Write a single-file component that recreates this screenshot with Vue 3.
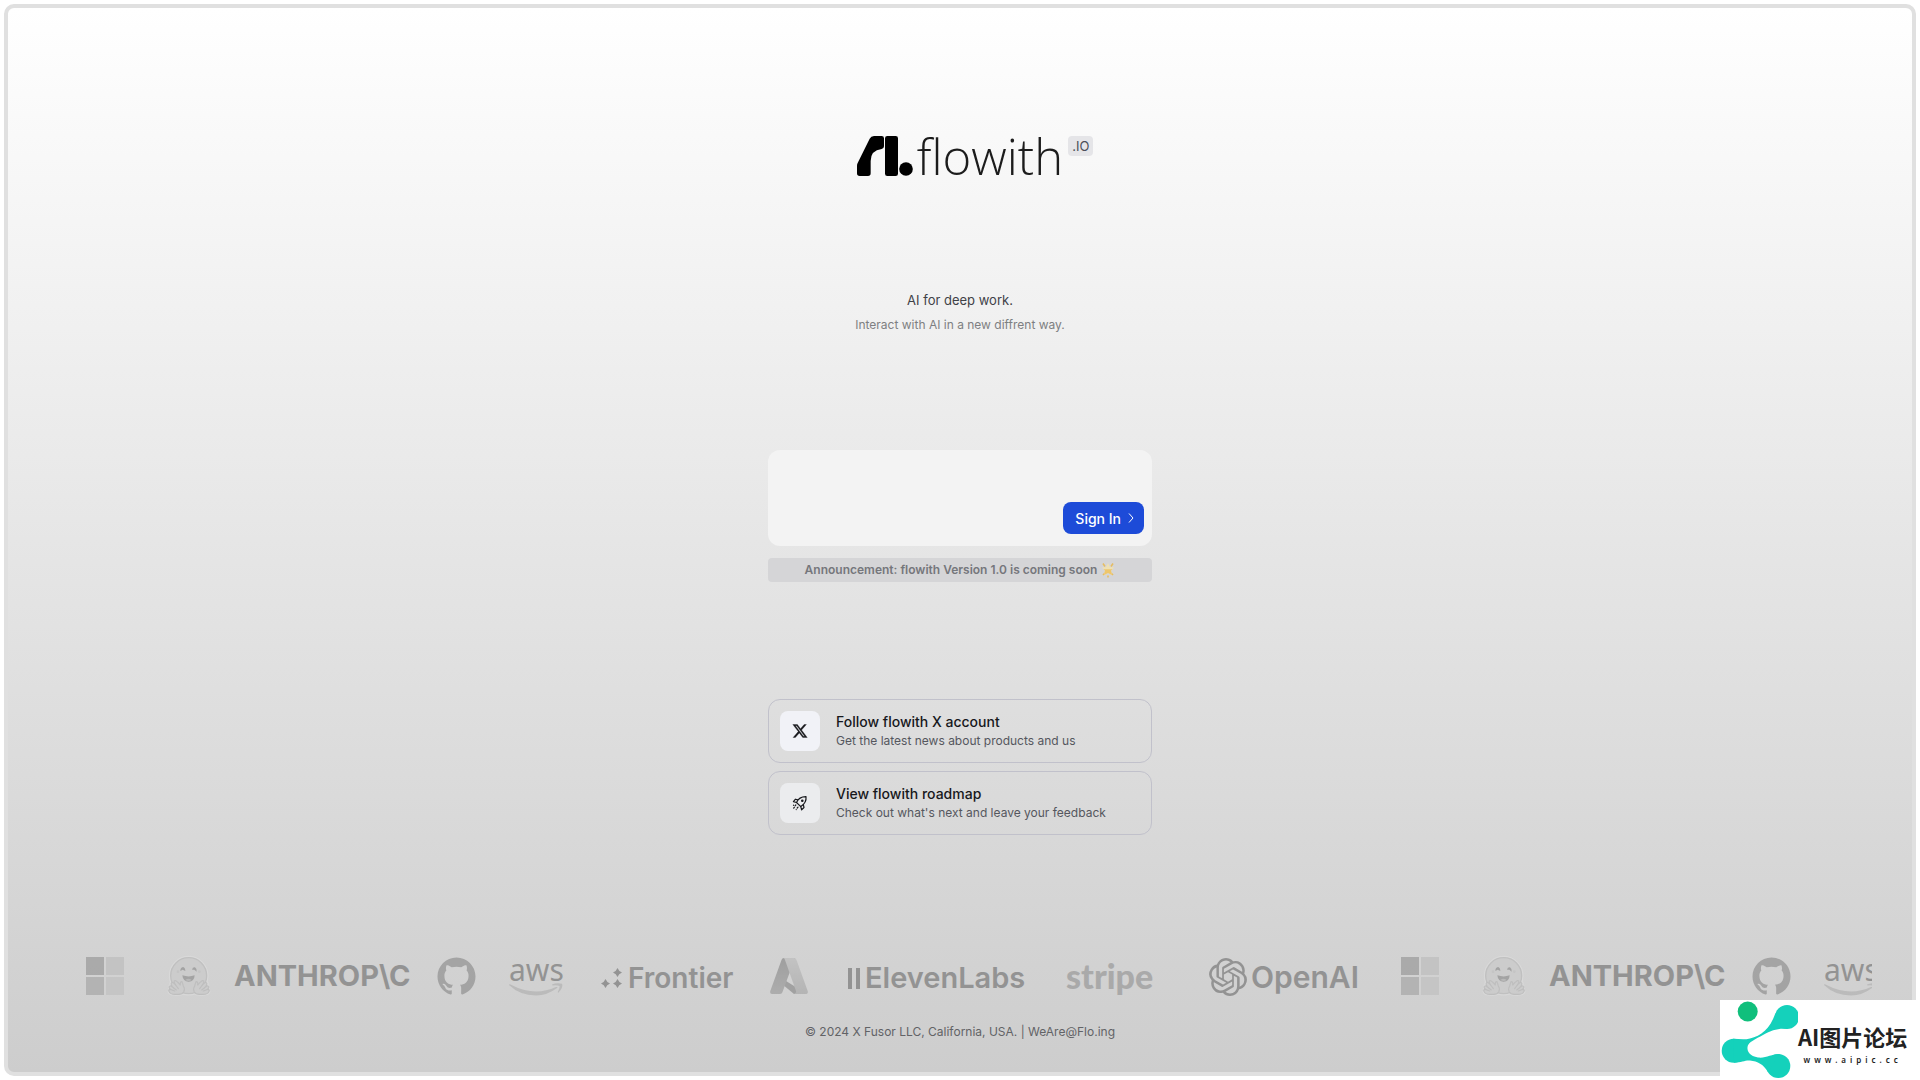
<template>
    <div class="page">
        <main class="frame">
            <h1 class="logo">
                <svg class="logo-mark" viewBox="57 48 168 120" aria-hidden="true">
                    <path d="M57 137Q57 133 59 129L95 56Q99 48 108 48H131Q138 48 138 55V79Q138 86 131 87Q98 91 98 123V160Q98 168 90 168H65Q57 168 57 160Z"/>
                    <rect x="141" y="48" width="39" height="120" rx="7"/>
                    <circle cx="204" cy="147" r="20.5"/>
                </svg>
                <span class="logo-name">flowith</span>
                <span class="logo-badge">.IO</span>
            </h1>

            <p class="tagline">AI for deep work.</p>
            <p class="subline">Interact with AI in a new diffrent way.</p>

            <section class="sign-box">
                <button type="button" class="sign-btn">
                    Sign In
                    <svg width="8" height="12" viewBox="0 0 8 12" fill="none" stroke="currentColor" aria-hidden="true">
                        <path d="M2 1.5L6 6L2 10.5"/>
                    </svg>
                </button>
            </section>

            <p class="announce">
                Announcement: flowith Version 1.0 is coming soon
                <svg class="star" viewBox="0 0 14 16" aria-hidden="true">
                    <path d="M2 1.500L4 4.500M12 1.500L10 4.500M2 13L4 11M12 13L10 11M7 13.500V15.500" stroke="#e6bd62" stroke-width="1.600"/>
                    <path d="M7 1L9 5L13.200 5.500L10 8.500L11 13L7 11L3 13L4 8.500L.8 5.500L5 5Z" fill="#eee0b4"/>
                    <path d="M2.500 7.200H11.500L10 8.500L11 13L7 11L3 13L4 8.500Z" fill="#eec66c"/>
                </svg>
            </p>

            <nav class="links">
                <a v-for="item in links" :key="item.title" href="#" class="link-card">
                    <span class="link-icon" :class="item.icon">
                        <svg v-if="item.icon == 'x'" width="16" height="16" viewBox="0 0 24 24" fill="currentColor" stroke="currentColor" stroke-width=".5">
                            <path d="M18.244 2.25h3.308l-7.227 8.26 8.502 11.24H16.17l-5.214-6.817L4.99 21.75H1.68l7.73-8.835L1.254 2.25H8.08l4.713 6.231zm-1.161 17.52h1.833L7.084 4.126H5.117z"/>
                        </svg>
                        <svg v-else width="16" height="16" viewBox="0 0 16 16" fill="none" stroke="currentColor" stroke-width="1.2" stroke-linejoin="round" stroke-linecap="round">
                            <path d="M4.500 7.500C6 4 8.500 1.500 14 1.600C14.600 6.500 12 9.500 8.800 11.600Z"/>
                            <path d="M5.800 4.900L3.500 4.200L1.400 6.600L4.500 7.500M11.300 9.700L12 12.500L9.600 14.800L8.800 11.600"/>
                            <circle cx="10.300" cy="5.700" r=".7"/>
                            <path d="M3.800 10L3 10.800M6 12.200L5.200 13M1.500 10.200V10.300M1.700 13L2.300 12.500M4.200 14.500V14.600"/>
                        </svg>
                    </span>
                    <span class="link-text">
                        <strong>{{ item.title }}</strong>
                        <small>{{ item.desc }}</small>
                    </span>
                </a>
            </nav>

            <div class="marquee">
                <div v-for="n in 2" :key="n" class="track">
                    <div class="brand microsoft">
                        <svg width="38" height="38" viewBox="0 0 38 38">
                            <path d="M0 0H18V18H0Z" fill="#909090"/>
                            <path d="M20 0H38V18H20Z" fill="#bababa"/>
                            <path d="M0 20H18V38H0Z" fill="#a0a0a0"/>
                            <path d="M20 20H38V38H20Z" fill="#bebebe"/>
                        </svg>
                    </div>
                    <div class="brand hugging">
                        <svg width="44" height="42" viewBox="322 44 132 126">
                            <g fill="#dedede" stroke="#dedede" stroke-width="7">
                                <circle cx="387" cy="106" r="56"/>
                                <path d="M330 148Q326 138 333 135Q330 126 339 124Q341 117 350 121Q372 130 376 148Q374 164 352 163Q330 164 327 154Z"/>
                                <path d="M446 148Q450 138 443 135Q446 126 437 124Q435 117 426 121Q404 130 400 148Q402 164 424 163Q446 164 449 154Z"/>
                            </g>
                            <circle cx="387" cy="106" r="54" fill="#c9c9c9" stroke="#b5b5b5" stroke-width="4"/>
                            <path d="M362 92Q362 81 370 80Q377 82 377 92L369 88ZM397 88Q399 80 406 81Q412 85 411 94L404 88Z" fill="#858585"/>
                            <path d="M368 105Q387 112 405 105Q404 124 387 124Q370 124 368 105Z" fill="#858585"/>
                            <path d="M377 119Q386 111 396 119Q387 125 377 119Z" fill="#a8a8a8"/>
                            <circle cx="355" cy="94" r="4" fill="#bdbdbd"/>
                            <circle cx="419" cy="94" r="4" fill="#bdbdbd"/>
                            <g fill="#c9c9c9" stroke="#b3b3b3" stroke-width="3.5" stroke-linejoin="round" stroke-linecap="round">
                                <path d="M328 153Q325 148 332 147Q325 139 331 137Q335 136 341 142Q331 131 336 127Q339 124 348 134Q340 122 346 121Q350 120 362 134Q361 123 367 124Q369 130 371 137Q377 145 372 155Q367 164 352 162Q332 164 328 153Z"/>
                                <path d="M448 153Q451 148 444 147Q451 139 445 137Q441 136 435 142Q445 131 440 127Q437 124 428 134Q436 122 430 121Q426 120 414 134Q415 123 409 124Q407 130 405 137Q399 145 404 155Q409 164 424 162Q444 164 448 153Z"/>
                                <path d="M332 147L345 152M341 142L350 149M348 134L356 145M444 147L431 152M435 142L426 149M428 134L420 145" fill="none"/>
                            </g>
                        </svg>
                    </div>
                    <div class="brand anthropic">ANTHROP\C</div>
                    <div class="brand github">
                        <svg width="39" height="38" viewBox="0 0 24 24" fill="#868686">
                            <path d="M12 .297c-6.63 0-12 5.373-12 12 0 5.303 3.438 9.8 8.205 11.385.6.113.82-.258.82-.577 0-.285-.01-1.04-.015-2.04-3.338.724-4.042-1.61-4.042-1.61C4.422 18.07 3.633 17.7 3.633 17.7c-1.087-.744.084-.729.084-.729 1.205.084 1.838 1.236 1.838 1.236 1.07 1.835 2.809 1.305 3.495.998.108-.776.417-1.305.76-1.605-2.665-.3-5.466-1.332-5.466-5.93 0-1.31.465-2.38 1.235-3.22-.135-.303-.54-1.523.105-3.176 0 0 1.005-.322 3.3 1.23.96-.267 1.98-.399 3-.405 1.02.006 2.04.138 3 .405 2.28-1.552 3.285-1.23 3.285-1.23.645 1.653.24 2.873.12 3.176.765.84 1.23 1.91 1.23 3.22 0 4.61-2.805 5.625-5.475 5.92.42.36.81 1.096.81 2.22 0 1.606-.015 2.896-.015 3.286 0 .315.21.69.825.57C20.565 22.092 24 17.592 24 12.297c0-6.627-5.373-12-12-12"/>
                        </svg>
                    </div>
                    <div class="brand aws">
                        <span class="aws-name">aws</span>
                        <svg width="54" height="13" viewBox="0 0 54 13" fill="#adadad">
                            <path d="M0 2Q0 .8 1.500 1.500Q25 14 47 4Q49.500 3.500 48 5Q38 12.500 27 12.500Q11 12.500 0 2Z"/>
                            <path d="M43 1.500Q48-.8 53 .8Q54.500 4 49.500 9.500Q48.500 10 49 8.500Q51 4.500 50.500 3Q48.500 2 43.500 2.500Z"/>
                        </svg>
                    </div>
                    <div class="brand frontier">
                        <svg width="21" height="20" viewBox="0 0 21 20" fill="#6a6a6a">
                            <path d="M16.500 0Q17.700 3.300 21 4.500Q17.700 5.700 16.500 9Q15.300 5.700 12 4.500Q15.300 3.300 16.500 0Z"/>
                            <path d="M16.500 11Q17.700 14.300 21 15.500Q17.700 16.700 16.500 20Q15.300 16.700 12 15.500Q15.300 14.300 16.500 11Z"/>
                            <path d="M4.500 11Q5.700 14.300 9 15.500Q5.700 16.700 4.500 20Q3.300 16.700 0 15.500Q3.300 14.300 4.500 11Z"/>
                        </svg>
                        <span>Frontier</span>
                    </div>
                    <div class="brand azure">
                        <svg width="38" height="36" viewBox="0 0 38 36">
                            <defs>
                                <linearGradient :id="'azl' + n" x1="0" y1="0" x2="0" y2="1">
                                    <stop offset="0" stop-color="#7d7d7d"/>
                                    <stop offset="1" stop-color="#969696"/>
                                </linearGradient>
                                <linearGradient :id="'azr' + n" x1="0" y1="0" x2="0" y2="1">
                                    <stop offset="0" stop-color="#b9b9b9"/>
                                    <stop offset="1" stop-color="#a2a2a2"/>
                                </linearGradient>
                            </defs>
                            <path d="M13 0H24L20 13L11 24Q11 25 12 26L24 36Q25 36 25 36H37L16 23Z" fill="#828282"/>
                            <path d="M14 0H25L12.500 34Q12 36 10 36H2Q-.5 36 .3 33L11.500 2Q12 0 14 0Z" :fill="'url(#azl' + n + ')'"/>
                            <path d="M13 0H24Q26 0 26.500 2L37.700 33Q38.500 36 36 36H24Q26.500 35 26 33L15 2Q14.500 0 13 0Z" :fill="'url(#azr' + n + ')'"/>
                        </svg>
                    </div>
                    <div class="brand eleven">
                        <svg width="13" height="21" viewBox="0 0 13 21" fill="#6a6a6a">
                            <path d="M0 0H4V21H0ZM8 0H12V21H8Z"/>
                        </svg>
                        <span>ElevenLabs</span>
                    </div>
                    <div class="brand stripe">stripe</div>
                    <div class="brand openai">
                        <svg width="38" height="40" viewBox="0 0 24 24" fill="#6a6a6a">
                            <path d="M22.2819 9.8211a5.9847 5.9847 0 0 0-.5157-4.9108 6.0462 6.0462 0 0 0-6.5098-2.9A6.0651 6.0651 0 0 0 4.9807 4.1818a5.9847 5.9847 0 0 0-3.9977 2.9 6.0462 6.0462 0 0 0 .7427 7.0966 5.98 5.98 0 0 0 .511 4.9107 6.051 6.051 0 0 0 6.5146 2.9001A5.9847 5.9847 0 0 0 13.2599 24a6.0557 6.0557 0 0 0 5.7718-4.2058 5.9894 5.9894 0 0 0 3.9977-2.9001 6.0557 6.0557 0 0 0-.7475-7.0729zm-9.022 12.6081a4.4755 4.4755 0 0 1-2.8764-1.0408l.1419-.0804 4.7783-2.7582a.7948.7948 0 0 0 .3927-.6813v-6.7369l2.02 1.1686a.071.071 0 0 1 .038.052v5.5826a4.504 4.504 0 0 1-4.4945 4.4944zm-9.6607-4.1254a4.4708 4.4708 0 0 1-.5346-3.0137l.142.0852 4.783 2.7582a.7712.7712 0 0 0 .7806 0l5.8428-3.3685v2.3324a.0804.0804 0 0 1-.0332.0615L9.74 19.9502a4.4992 4.4992 0 0 1-6.1408-1.6464zM2.3408 7.8956a4.485 4.485 0 0 1 2.3655-1.9728V11.6a.7664.7664 0 0 0 .3879.6765l5.8144 3.3543-2.0201 1.1685a.0757.0757 0 0 1-.071 0l-4.8303-2.7865A4.504 4.504 0 0 1 2.3408 7.872zm16.5963 3.8558L13.1038 8.364 15.1192 7.2a.0757.0757 0 0 1 .071 0l4.8303 2.7913a4.4944 4.4944 0 0 1-.6765 8.1042v-5.6772a.79.79 0 0 0-.407-.667zm2.0107-3.0231l-.142-.0852-4.7735-2.7818a.7759.7759 0 0 0-.7854 0L9.409 9.2297V6.8974a.0662.0662 0 0 1 .0284-.0615l4.8303-2.7866a4.4992 4.4992 0 0 1 6.6802 4.66zM8.3065 12.863l-2.02-1.1638a.0804.0804 0 0 1-.038-.0567V6.0742a4.4992 4.4992 0 0 1 7.3757-3.4537l-.142.0805L8.704 5.459a.7948.7948 0 0 0-.3927.6813zm1.0976-2.3654l2.602-1.4998 2.6069 1.4998v2.9994l-2.5974 1.4997-2.6067-1.4997Z"/>
                        </svg>
                        <span>OpenAI</span>
                    </div>
                </div>
            </div>

            <footer class="footer">© 2024 X Fusor LLC, California, USA. | WeAre@Flo.ing</footer>
        </main>

        <aside class="stamp">
            <svg width="78" height="80" viewBox="0 0 78 80" aria-hidden="true">
                <circle cx="27.700" cy="11.500" r="10" fill="#10bf7c"/>
                <g fill="#14d1bb">
                    <circle cx="67" cy="17" r="12"/>
                    <circle cx="13.700" cy="50.700" r="12"/>
                    <circle cx="58.300" cy="66" r="12"/>
                    <path d="M55.500 13C50 29 41 36 30 38.500C24 40 19 39 13 38.700L14 62.700C22 62.500 25 60 30 60.500C38 61.500 43 64 48 72L60 54C51 54 46 58.500 38 57.500C30 56 27 52 27.500 47C28 42 36 39 43 35C52 30 58 28 68 29Z"/>
                </g>
            </svg>
            <div class="stamp-text">
                <b>AI图片论坛</b>
                <small>www.aipic.cc</small>
            </div>
        </aside>
    </div>
</template>
<script setup>
const links = [
    { icon: "x", title: "Follow flowith X account", desc: "Get the latest news about products and us" },
    { icon: "rocket", title: "View flowith roadmap", desc: "Check out what's next and leave your feedback" }
]
</script>
<style>
body{
    margin: 0;
    background: #fff;
}
</style>
<style scoped>
.page{
    box-sizing: border-box;
    min-height: 100vh;
    padding: 4px;
    display: flex;
    font-family: Inter, "Noto Sans CJK SC", sans-serif;
}
.frame{
    box-sizing: border-box;
    flex: 1;
    min-width: 0;
    padding: 128px 40px 28px;
    border: 4px solid #e0e0e0;
    border-radius: 10px;
    background: linear-gradient(#fff, #cdcdcd);
    display: flex;
    flex-direction: column;
    align-items: center;
}
svg{
    display: block;
    flex-shrink: 0;
}
p{
    margin: 0;
}
.logo{
    position: relative;
    display: flex;
    height: 40px;
    gap: 4px;
    margin: 0;
}
.logo-mark{
    width: 56px;
    height: 40px;
}
.logo-name{
    font-family: "Open Sans", sans-serif;
    font-size: 49px;
    font-weight: 300;
    line-height: 40px;
    color: #1c1c1c;
}
.logo-badge{
    position: absolute;
    left: 100%;
    top: 0;
    margin-left: 5px;
    padding: 0 4px;
    border-radius: 4px;
    background: #e5e5e8;
    color: #4b5059;
    font-size: 13px;
    font-weight: 400;
    line-height: 20px;
}
.tagline{
    margin-top: 112px;
    font-size: 13px;
    line-height: 24px;
    color: #3f4147;
}
.subline{
    font-size: 12px;
    line-height: 26px;
    color: #7e7f82;
}
.sign-box{
    box-sizing: border-box;
    width: 384px;
    height: 96px;
    margin-top: 112px;
    padding: 12px 8px;
    border-radius: 12px;
    background: #f3f3f3;
    display: flex;
    justify-content: flex-end;
    align-items: flex-end;
}
.sign-btn{
    display: flex;
    align-items: center;
    gap: 6px;
    height: 32px;
    padding: 0 9px 0 12px;
    border: 0;
    border-radius: 8px;
    background: #1d4bd8;
    color: #fff;
    font-family: inherit;
    font-size: 14px;
    font-weight: 500;
}
.announce{
    display: flex;
    justify-content: center;
    align-items: center;
    gap: 4px;
    width: 384px;
    margin-top: 12px;
    border-radius: 4px;
    background: #d5d5d7;
    color: #75777c;
    font-size: 12px;
    font-weight: 600;
    line-height: 24px;
}
.star{
    width: 14px;
    height: 16px;
}
.links{
    display: flex;
    flex-direction: column;
    gap: 8px;
    width: 384px;
    margin-top: 117px;
}
.link-card{
    box-sizing: border-box;
    display: flex;
    align-items: center;
    gap: 16px;
    height: 64px;
    padding: 0 11px;
    border: 1px solid #c1c1cb;
    border-radius: 12px;
    color: #17181c;
    text-decoration: none;
}
.link-icon{
    display: flex;
    align-items: center;
    justify-content: center;
    width: 40px;
    height: 40px;
    border-radius: 8px;
    background: #ebecee;
}
.link-icon.x{
    background: #f1f2f7;
}
.link-text{
    display: flex;
    flex-direction: column;
}
.link-text strong{
    font-size: 14px;
    font-weight: 500;
    line-height: 20px;
}
.link-text small{
    font-size: 12px;
    line-height: 18px;
    color: #55575e;
}
.marquee{
    box-sizing: border-box;
    align-self: stretch;
    display: flex;
    margin-top: 109px;
    padding: 12px 0 12px 38px;
    overflow: hidden;
}
.track{
    display: flex;
    flex-shrink: 0;
    opacity: 0.6;
}
.brand{
    box-sizing: border-box;
    display: flex;
    align-items: center;
    height: 40px;
    color: #6a6a6a;
    font-size: 29px;
    font-weight: 600;
    line-height: 40px;
    white-space: nowrap;
}
.microsoft{
    width: 81px;
}
.hugging{
    width: 67px;
}
.anthropic{
    width: 203px;
    font-weight: 700;
}
.github{
    width: 72px;
}
.aws{
    width: 92px;
    flex-direction: column;
    align-items: flex-start;
}
.aws-name{
    font-family: "Noto Sans", sans-serif;
    font-size: 30px;
    font-weight: 400;
    line-height: 27px;
}
.frontier{
    width: 169px;
    gap: 6px;
    padding-top: 4px;
    font-size: 28px;
}
.azure{
    width: 78px;
}
.eleven{
    width: 218px;
    gap: 4px;
    padding-top: 4px;
}
.stripe{
    width: 143px;
    font-family: Lato, sans-serif;
    font-size: 34px;
    font-weight: 900;
    color: #909090;
}
.openai{
    width: 192px;
    gap: 4px;
    padding-top: 2px;
    font-size: 30px;
}
.footer{
    margin-top: 12px;
    font-size: 12px;
    line-height: 24px;
    color: #626366;
}
.stamp{
    position: fixed;
    right: 0;
    bottom: 0;
    display: flex;
    width: 200px;
    height: 80px;
    background: #fff;
    color: #222;
}
.stamp-text{
    display: flex;
    flex-direction: column;
    align-items: center;
    padding-top: 21px;
}
.stamp-text b{
    font-family: "Noto Sans CJK SC", sans-serif;
    font-size: 22px;
    line-height: 30px;
}
.stamp-text small{
    font-family: "Noto Sans", sans-serif;
    font-size: 8px;
    font-weight: 600;
    line-height: 18px;
    letter-spacing: 4px;
}
</style>
